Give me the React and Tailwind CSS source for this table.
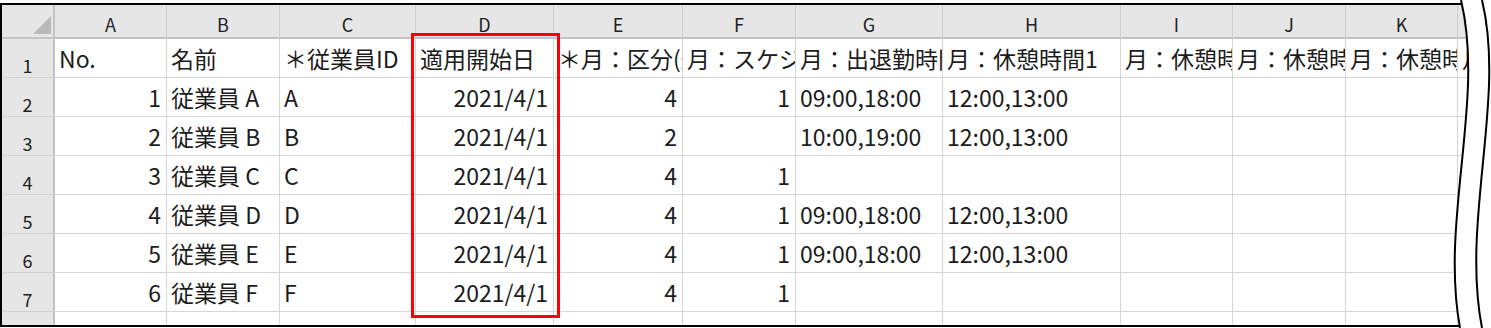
const COLS = ['A', 'B', 'C', 'D', 'E', 'F', 'G', 'H', 'I', 'J', 'K', 'L'];

const TITLES = [
  'No.',
  '名前',
  '＊従業員ID',
  '適用開始日',
  '＊月：区分(通常)',
  '月：スケジュール',
  '月：出退勤時間',
  '月：休憩時間1',
  '月：休憩時間2',
  '月：休憩時間3',
  '月：休憩時間4',
  '月：休憩時間5',
];

// r = right aligned (numbers, dates), l = left aligned (text)
const ALIGN = ['r', 'l', 'l', 'r', 'r', 'r', 'l', 'l', 'l', 'l', 'l', 'l'];

const ROWS = [
  ['1', '従業員 A', 'A', '2021/4/1', '4', '1', '09:00,18:00', '12:00,13:00'],
  ['2', '従業員 B', 'B', '2021/4/1', '2', '', '10:00,19:00', '12:00,13:00'],
  ['3', '従業員 C', 'C', '2021/4/1', '4', '1', '', ''],
  ['4', '従業員 D', 'D', '2021/4/1', '4', '1', '09:00,18:00', '12:00,13:00'],
  ['5', '従業員 E', 'E', '2021/4/1', '4', '1', '09:00,18:00', '12:00,13:00'],
  ['6', '従業員 F', 'F', '2021/4/1', '4', '1', '', ''],
];

const FONT = "font-['Noto_Sans_CJK_JP','Noto_Sans',sans-serif]";

function ColHeader({ label }) {
  return (
    <div className="flex h-[34px] items-center justify-center border-b-2 border-r border-b-[#c4c4c4] border-r-[#d0d0d0] bg-[#e6e6e6] pt-[5px] text-[18px] leading-none text-[#222]">
      {label}
    </div>
  );
}

function RowHeader({ label }) {
  return (
    <div className="flex h-[39px] items-end justify-center border-b border-r-2 border-b-[#d0d0d0] border-r-[#c4c4c4] bg-[#e6e6e6] pb-[3px] text-[18px] leading-none text-[#222]">
      {label}
    </div>
  );
}

function Cell({ value, align }) {
  const side = align === 'r' ? 'justify-end pr-[5px]' : 'justify-start pl-[4px]';
  return (
    <div
      className={`flex h-[39px] items-center overflow-hidden whitespace-nowrap border-b border-r border-[#d6d6d6] bg-white text-[23px] leading-none text-[#1c1c1c] ${side}`}
    >
      {value}
    </div>
  );
}

function Corner() {
  return (
    <div className="flex h-[34px] items-end justify-end border-b-2 border-r-2 border-[#c4c4c4] bg-[#e6e6e6] pb-[3px] pr-[2px]">
      <svg width="18" height="18" viewBox="0 0 18 18">
        <polygon points="18,0 18,18 0,18" fill="#b9b9b9" />
      </svg>
    </div>
  );
}

export default function App() {
  return (
    <div className={`relative h-[328px] w-[1491px] overflow-hidden bg-white pt-[3px] ${FONT}`}>
      {/* sheet */}
      <div className="h-[324px] w-max overflow-hidden border-b-2 border-l-2 border-t-2 border-black">
        <div className="grid grid-cols-[53px_112px_113px_136px_138px_129px_113px_147px_178px_112px_113px_112px_112px]">
          <Corner />
          {COLS.map((c) => (
            <ColHeader key={c} label={c} />
          ))}

          <RowHeader label="1" />
          {TITLES.map((t) => (
            <Cell key={t} value={t} align="l" />
          ))}

          {ROWS.map((row, r) => (
            <div key={r} className="contents">
              <RowHeader label={String(r + 2)} />
              {COLS.map((c, i) => (
                <Cell key={c} value={row[i] || ''} align={ALIGN[i]} />
              ))}
            </div>
          ))}

          <RowHeader label="8" />
          {COLS.map((c) => (
            <Cell key={c} value="" align="l" />
          ))}
        </div>
      </div>

      {/* highlight around the start-date column */}
      <div className="absolute left-[411px] top-[33px] h-[285px] w-[149px] border-[3px] border-[#ff0000]" />

      {/* wavy break mark on the right edge */}
      <svg
        className="absolute left-[1430px] top-0"
        width="61"
        height="328"
        viewBox="1430 0 61 328"
      >
        <path
          d="M1461,0 C1485,100 1440,220 1460,328 L1491,328 L1491,0 Z"
          fill="#ffffff"
        />
        <path d="M1461,0 C1485,100 1440,220 1460,328" fill="none" stroke="#000" strokeWidth="2" />
        <path d="M1482,0 C1506,100 1461,220 1482,328" fill="none" stroke="#000" strokeWidth="2" />
      </svg>
    </div>
  );
}
